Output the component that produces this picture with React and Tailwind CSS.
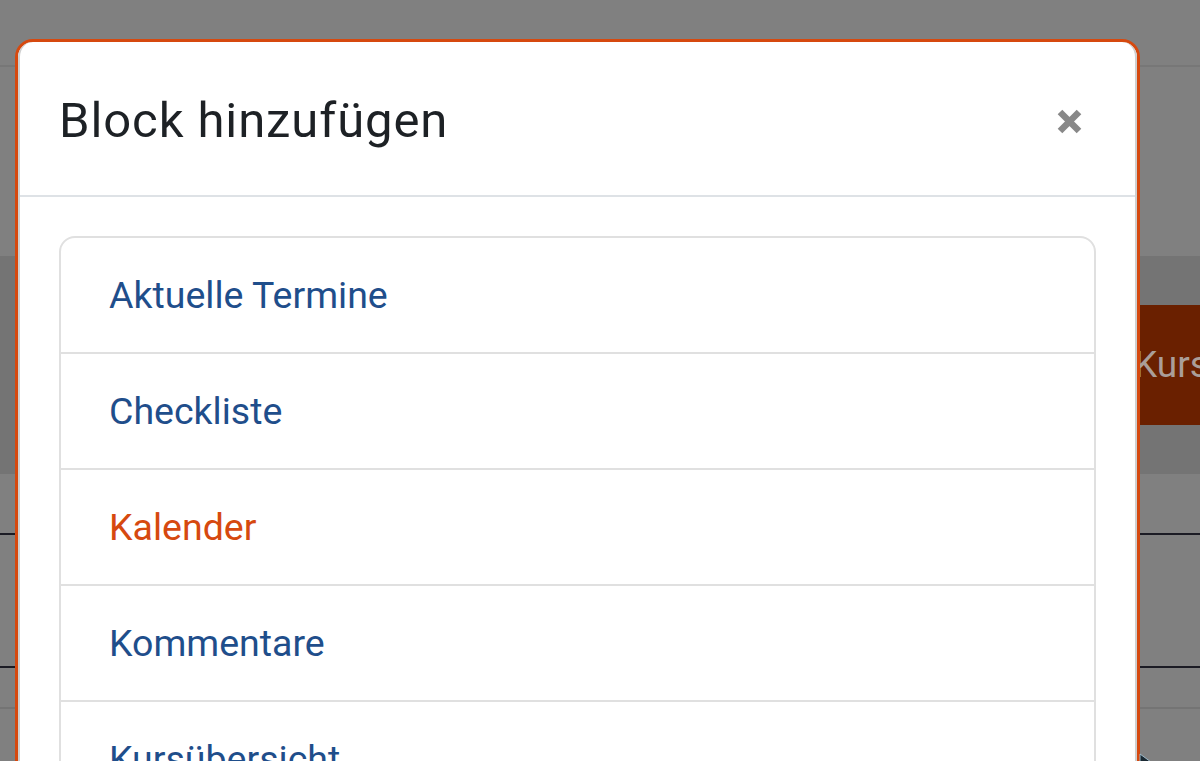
const blocks = [
  { label: "Aktuelle Termine" },
  { label: "Checkliste" },
  { label: "Kalender", active: true },
  { label: "Kommentare" },
  { label: "Kursübersicht" },
  { label: "Lernpläne" },
];

function BackgroundPage() {
  return (
    <div className="flex h-full flex-col bg-[#808080]">
      <div className="h-[67px] shrink-0 border-b-2 border-[#777777]" />
      <div className="h-[189px] shrink-0" />
      <div className="flex h-[218px] shrink-0 items-center justify-end bg-[#747474]">
        <div className="flex h-[120px] w-[72px] items-center overflow-hidden whitespace-nowrap bg-[#6a2000] pl-[6px] text-[37px] text-[#aa9e99]">
          Kursübersicht
        </div>
      </div>
      <div className="h-[59px] shrink-0" />
      <div className="h-[2px] shrink-0 bg-[#1b1b24]" />
      <div className="h-[131px] shrink-0" />
      <div className="h-[2px] shrink-0 bg-[#1b1b24]" />
      <div className="h-[41px] shrink-0 border-b-2 border-[#747474]" />
    </div>
  );
}

function CloseIcon() {
  return (
    <svg width="27" height="27" viewBox="0 0 27 27">
      <path
        d="M4 4 L23 23 M23 4 L4 23"
        stroke="#888888"
        strokeWidth="6.5"
        strokeLinecap="butt"
      />
    </svg>
  );
}

export default function App() {
  return (
    <div
      className="relative h-[761px] w-[1200px] overflow-hidden"
      style={{ fontFamily: "Roboto, 'Noto Sans', sans-serif" }}
    >
      <BackgroundPage />

      <div className="absolute left-[15px] top-[39px] w-[1125px] rounded-[18px] border-[3px] border-[#d6490f] bg-white">
        <div className="rounded-[15px] border-x-2 border-[#cfcfcf]">
          <div className="flex h-[155px] items-center justify-between border-b-[2.5px] border-[#dee2e6] pl-[39px] pr-[46px]">
            <h5 className="mt-[4px] text-[49px] leading-[56px] tracking-[0.9px] text-[#1d2125]">
              Block hinzufügen
            </h5>
            <button className="mt-[6px] flex h-[40px] w-[40px] items-center justify-center">
              <CloseIcon />
            </button>
          </div>

          <div className="px-[39px] pt-[39px] pb-[40px]">
            <div className="overflow-hidden rounded-[16px] border-[2.5px] border-[#e0e0e0]">
              {blocks.map((b, i) => (
                <a
                  key={b.label}
                  className={
                    "block px-[48px] py-[29px] text-[37.5px] leading-[56px] " +
                    (i > 0 ? "border-t-[2.5px] border-[#e0e0e0] " : "") +
                    (b.active ? "text-[#d6490f]" : "text-[#1f4e8b]")
                  }
                >
                  {b.label}
                </a>
              ))}
            </div>
          </div>
        </div>
      </div>

      <svg
        className="absolute left-[1139px] top-[753px]"
        width="14"
        height="14"
        viewBox="0 0 14 14"
      >
        <path d="M1 1 L1 13 L5 9 L12 9 Z" fill="#1b2a33" stroke="#9bb8c8" strokeWidth="1" />
      </svg>
    </div>
  );
}
